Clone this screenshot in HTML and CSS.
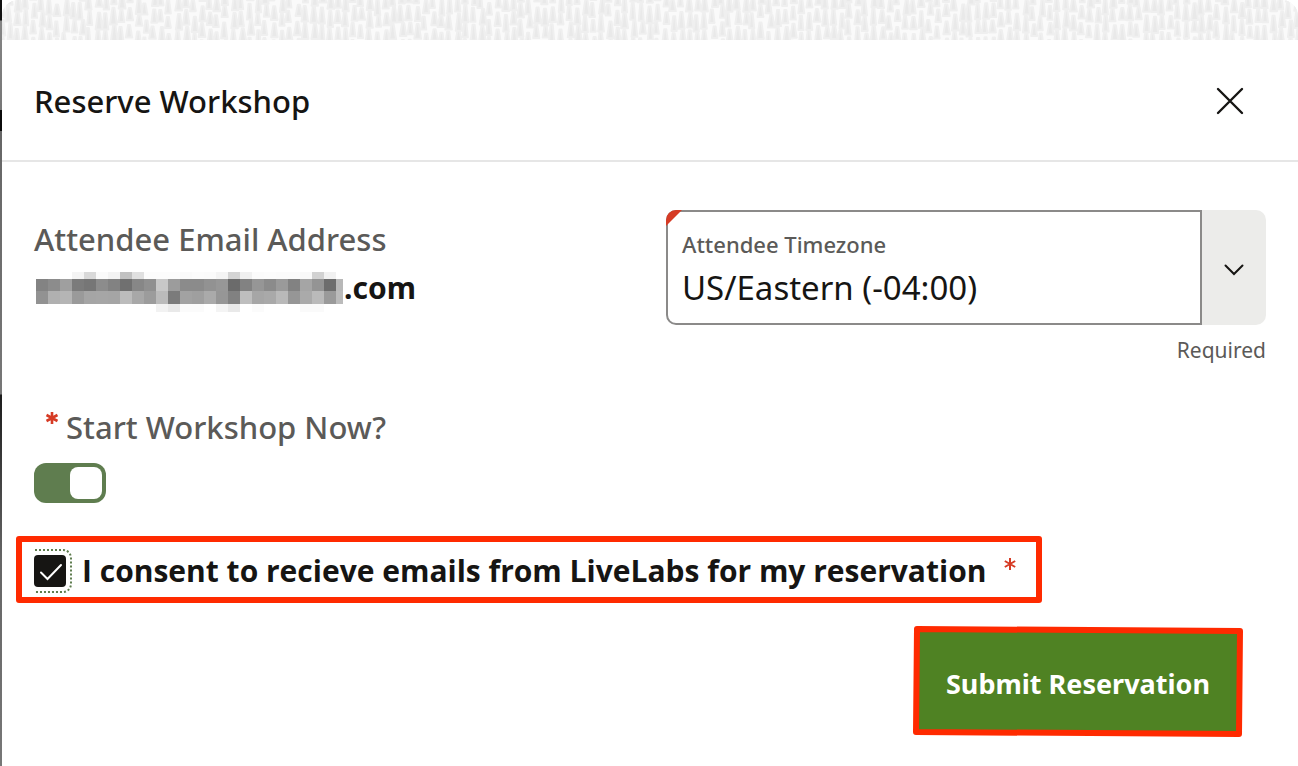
FILE: index.html
```html
<!DOCTYPE html>
<html lang="en">
<head>
<meta charset="utf-8">
<title>Reserve Workshop</title>
<link rel="stylesheet" href="styles.css">
</head>
<body>
<div class="page">
  <main class="dialog">
    <svg class="texture" id="texture" aria-hidden="true"></svg>
    <header class="dialog-header">
      <h1 class="dialog-title">Reserve Workshop</h1>
      <button class="close" type="button" aria-label="Close">
        <svg width="28" height="28" viewBox="0 0 28 28" fill="none" stroke="#161513" stroke-width="2.4" stroke-linecap="round"><path d="M2 2L26 26M26 2L2 26"/></svg>
      </button>
    </header>
    <form class="form">
      <div class="columns">
        <div class="email">
          <div class="label">Attendee Email Address</div>
          <div class="email-value">
            <svg class="mosaic" id="mosaic" width="310" height="40" viewBox="0 0 310 40" shape-rendering="crispEdges" aria-hidden="true"></svg>
            <span>.com</span>
          </div>
        </div>
        <div class="timezone">
          <div class="lov">
            <div class="lov-box">
              <label class="lov-label" for="tz">Attendee Timezone</label>
              <select class="lov-select" id="tz"><option>US/Eastern (-04:00)</option></select>
            </div>
            <button class="lov-button" type="button" aria-label="Open list">
              <svg width="20" height="12" viewBox="0 0 20 12" fill="none" stroke="#161513" stroke-width="2" stroke-linecap="round"><path d="M1.500 1.500L10 10L18.500 1.500"/></svg>
            </button>
          </div>
          <div class="hint">Required</div>
        </div>
      </div>
      <div class="start">
        <label class="label start-label" for="start"><svg class="star" width="14" height="14" viewBox="0 0 14 14" stroke="#d63b25" stroke-width="2.600"><path d="M7 1V13M1.500 4L12.500 10M12.500 4L1.500 10"/></svg>Start Workshop Now?</label>
        <input class="switch" id="start" type="checkbox" role="switch" checked>
      </div>
      <div class="consent">
        <span class="check-wrap">
          <input class="check" id="consent" type="checkbox" checked>
          <svg class="tick" width="24" height="18" viewBox="0 0 24 18" fill="none" stroke="#fff" stroke-width="2" stroke-linecap="round"><path d="M2 9.500L8.500 16L22 2"/></svg>
          <svg class="focus" width="38" height="44" viewBox="0 0 38 44" fill="none" stroke="#5f7d4f" stroke-width="2" stroke-dasharray="2 2"><path d="M1 1H29A8 8 0 0 1 37 9V35A8 8 0 0 1 29 43H1"/></svg>
        </span>
        <label class="consent-label" for="consent">I consent to recieve emails from LiveLabs for my reservation</label>
        <svg class="consent-star" width="12" height="12" viewBox="0 0 12 12" stroke="#d63b25" stroke-width="2"><path d="M6 0V12M.8 3L11.200 9M11.200 3L.8 9"/></svg>
      </div>
      <div class="actions">
        <button class="submit" type="submit">
          <svg class="submit-frame" viewBox="0 0 330 111" preserveAspectRatio="none" aria-hidden="true"><path d="M4 3L327 5L326 108L3 106Z" fill="#4f8223" stroke="#ff2a00" stroke-width="6" stroke-linejoin="round"/></svg>
          <span class="submit-text">Submit Reservation</span>
        </button>
      </div>
    </form>
  </main>
</div>
<script src="script.js"></script>
</body>
</html>
```
FILE: styles.css
```css
* { box-sizing: border-box; }
body {
  margin: 0;
  background: #fff;
  color: #161513;
  font-family: "Noto Sans", "Open Sans", sans-serif;
}
button, select { font: inherit; color: inherit; }
.page {
  min-height: 100vh;
  padding-left: 2px;
  background: linear-gradient(#111 0 20px, #858585 21px, #777 110px, #0b0b0b 110px 131px, #666 131px, #777 394px, #1c1c1c 395px, #666 560px, #777 766px);
}
.dialog { min-height: 100vh; background: #fff; }
.texture { display: block; width: 100%; height: 40px; border-radius: 16px 16px 0 0; background: #fafafa; }
.dialog-header {
  display: flex;
  align-items: center;
  justify-content: space-between;
  height: 122px;
  padding: 2px 54px 0 32px;
  border-bottom: 2px solid #e6e6e6;
}
.dialog-title { margin: 0; font-size: 31px; line-height: 40px; font-weight: 500; }
.close { display: flex; padding: 0; border: 0; background: none; }
.form { padding: 48px 32px 0; }
.columns { display: grid; grid-template-columns: 1fr 1fr; gap: 32px; }
.email { padding-top: 9px; }
.label { color: #5b5a58; font-size: 31px; line-height: 40px; font-weight: 500; }
.email-value {
  display: flex;
  align-items: flex-start;
  padding-top: 13px;
  font-size: 30px;
  line-height: 32px;
  font-weight: 700;
}
.mosaic { display: block; flex: none; }
.lov { display: flex; height: 115px; }
.lov-box {
  position: relative;
  display: flex;
  flex: 1;
  flex-direction: column;
  padding: 16px 14px 0;
  border: 2px solid #8b8a89;
  border-radius: 10px 0 0 10px;
}
.lov-box::before {
  content: "";
  position: absolute;
  left: -2px;
  top: -2px;
  width: 16px;
  height: 16px;
  border-radius: 10px 0 0 0;
  background: #d63b25;
  clip-path: polygon(0 0, 100% 0, 0 100%);
}
.lov-label { color: #5b5a58; font-size: 22px; line-height: 32px; font-weight: 500; }
.lov-select {
  appearance: none;
  width: 100%;
  padding: 0;
  border: 0;
  background: none;
  font-size: 33px;
  line-height: 56px;
}
.lov-button {
  display: flex;
  align-items: center;
  justify-content: center;
  width: 64px;
  padding: 4px 0 0;
  border: 0;
  border-radius: 0 10px 10px 0;
  background: #ececea;
}
.hint { padding-top: 9px; color: #5b5a58; font-size: 21px; line-height: 32px; text-align: right; }
.start { padding-top: 41px; }
.start-label { display: flex; gap: 7px; padding-left: 11px; }
.star { margin-top: 4px; }
.switch {
  display: block;
  appearance: none;
  width: 72px;
  height: 40px;
  margin: 16px 0 0;
  padding: 4px;
  border-radius: 12px;
  background: #5f7d4f;
}
.switch::before {
  content: "";
  display: block;
  width: 32px;
  height: 32px;
  margin-left: auto;
  border-radius: 8px;
  background: #fff;
}
.consent {
  display: flex;
  align-items: center;
  width: fit-content;
  height: 67px;
  margin: 33px 0 0 -18px;
  padding: 2px 20px 0 12px;
  border: 6px solid #ff2a00;
  border-radius: 3px;
}
.check-wrap { position: relative; display: block; width: 32px; height: 32px; }
.check {
  display: block;
  appearance: none;
  width: 32px;
  height: 32px;
  margin: 0;
  border-radius: 4px;
  background: #161513;
}
.tick { position: absolute; left: 5px; top: 8px; pointer-events: none; }
.focus { position: absolute; left: 0; top: -6px; pointer-events: none; }
.consent-label {
  padding-left: 16px;
  font-family: "Open Sans", "Noto Sans", sans-serif;
  font-size: 30px;
  line-height: 40px;
  font-weight: 700;
}
.consent-star { margin: 0 0 14px 18px; }
.actions { display: flex; justify-content: flex-end; padding: 23px 23px 28px 0; }
.submit {
  position: relative;
  width: 330px;
  height: 111px;
  padding: 4px 0 0;
  border: 0;
  background: none;
  color: #fff;
  font-size: 27px;
  line-height: 40px;
  font-weight: 700;
}
.submit-frame { position: absolute; inset: 0; width: 100%; height: 100%; }
.submit-text { position: relative; }
```
FILE: script.js
```js
// Header texture: rows of tapered brush marks with slight irregularity.
let seed = 7;
const rand = () => (seed = (seed * 16807) % 2147483647) / 2147483647;
let marks = "";
for (let x = -4; x < 2600; x += 8) {
  for (let y = -14 + rand() * 14; y < 44; y += 17) {
    const px = x + rand() * 3;
    const h = 11 + rand() * 6;
    const w = 3 + rand() * 2;
    marks += `M${px + w / 2 - 1} ${y}h2l${w / 2} ${h}h${-w - 2}z`;
  }
}
document.getElementById("texture").innerHTML =
  `<path d="${marks}" fill="#e9e9e9" stroke="#efefef" stroke-width="2" stroke-linejoin="round"/>`;

// Mosaic that hides the local part of the address: one grey level per cell.
const rows = [
  [0, 7, "ff ff ff f4 d9 fa f3 c1 e0 fc fc fc fa fc fb f4 d4 f0 fb fc fb fb f9 d2 f1 ff"],
  [7, 12, "83 8c 9f 7b 76 8c 82 70 87 90 c8 9c 8b 8b 92 97 6b 82 96 8b 9a 82 a5 94 6d b8"],
  [19, 13, "92 b0 b5 9a a5 a6 a5 bc a8 9c bb 7b a2 9f aa 96 81 be a6 a9 b9 96 aa ba 9a bb"],
  [32, 8, "ff ff ff ff ff ff ff ff ff ff f2 e9 fb fb ff f4 e9 ff fb ff ff ff fa fa ff ff"]
];
let cells = "";
for (const [y, h, levels] of rows) {
  levels.split(" ").forEach((v, i) => {
    cells += `<rect x="${2 + i * 12}" y="${y}" width="${i === 25 ? 7 : 12}" height="${h}" fill="#${v}${v}${v}"/>`;
  });
}
document.getElementById("mosaic").innerHTML = cells;
```
